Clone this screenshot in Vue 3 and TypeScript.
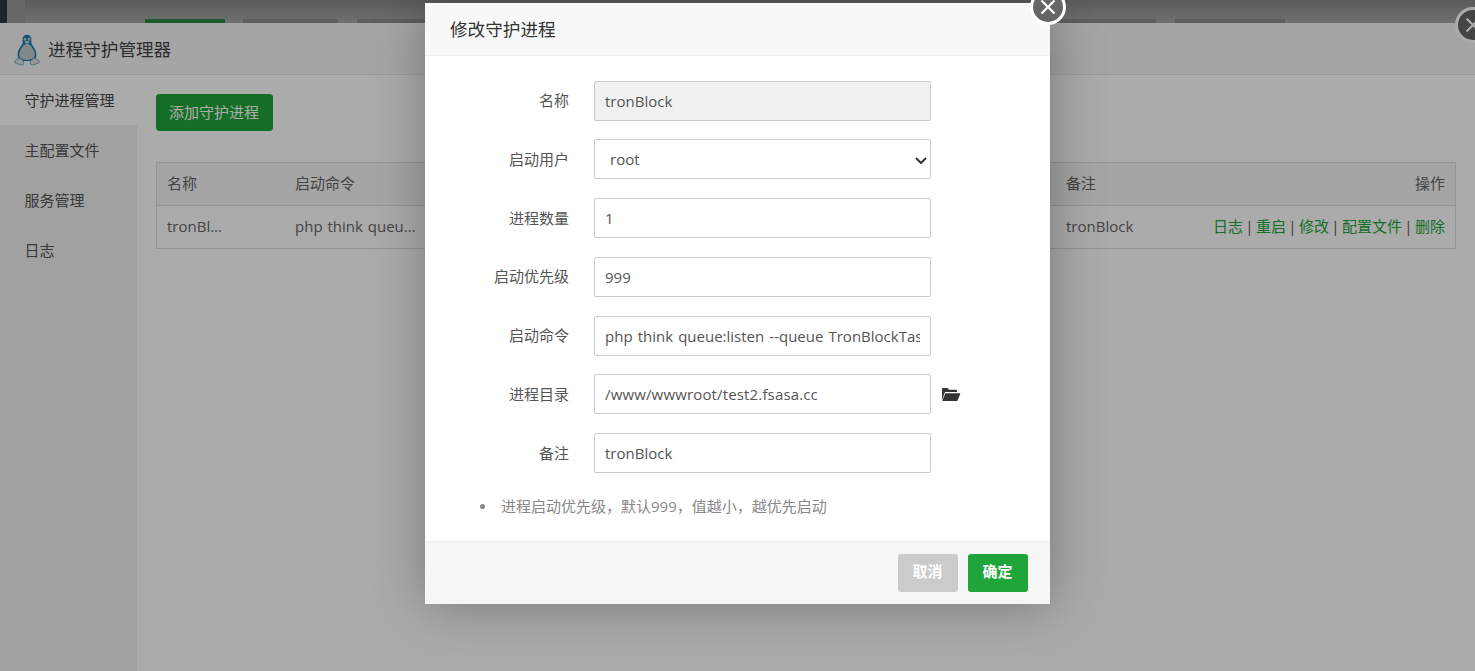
<script setup lang="ts">
const menu: string[] = ['守护进程管理', '主配置文件', '服务管理', '日志']
const ops: string[] = ['日志', '重启', '修改', '配置文件', '删除']
const fields = [
  { label: '名称', value: 'tronBlock', disabled: true },
  { label: '启动用户', select: true, value: 'root' },
  { label: '进程数量', value: '1' },
  { label: '启动优先级', value: '999' },
  { label: '启动命令', value: 'php think queue:listen --queue TronBlockTask', wide: 'cmd' },
  { label: '进程目录', value: '/www/wwwroot/test2.fsasa.cc', folder: true, wide: 'path' },
  { label: '备注', value: 'tronBlock' },
]
</script>

<template>
  <div class="page">
    <div class="topbar">
      <div class="rail"></div>
      <div class="rail2"></div>
      <div class="tabs">
        <span class="tab green"></span>
        <span class="tab t2"></span>
        <span class="tab t3"></span>
        <span class="tab t4"></span>
        <span class="tab t5"></span>
      </div>
    </div>
    <div class="panel">
      <header class="panel-head">
        <svg class="tux" viewBox="0 0 26 32" width="26" height="32">
          <path d="M13 .8c-3 0-4.400 2.300-4.400 5 0 2 .4 3-.6 4.700C6.400 13 3.600 16.200 3.600 20.500c0 2 .6 3.400 1.400 4.300L9 27h8l4-2.200c.9-1 1.400-2.400 1.400-4.300 0-4.300-2.800-7.500-4.400-10-1-1.700-.6-2.700-.6-4.700 0-2.700-1.400-5-4.400-5z" fill="#1b7fae" />
          <path d="M13 9.800c-2.200.6-3.700 1.400-4.400 3-1.500 2.200-3.400 4.900-3.400 7.900 0 2.900 2.400 5.200 7.800 5.200s7.800-2.300 7.800-5.200c0-3-1.900-5.700-3.400-7.900-.7-1.600-2.200-2.400-4.400-3z" fill="#c4ccd0" />
          <ellipse cx="11" cy="5.200" rx="1.200" ry="1.600" fill="#c4ccd0" />
          <ellipse cx="15" cy="5.200" rx="1.200" ry="1.600" fill="#c4ccd0" />
          <path d="M10.300 8l2.700-1.300L15.700 8 13 9.800z" fill="#d8dcdc" />
          <path d="M5.500 24.300C3.200 24.800.6 26.800.5 28c0 1.200 3 1.600 5.500 2.600 1.700.8 3.200.6 3.600-.8.500-1.700-1.400-5-4.100-5.500zM20.500 24.300c2.300.5 4.900 2.500 5 3.700 0 1.200-3 1.600-5.500 2.600-1.700.8-3.200.6-3.600-.8-.5-1.700 1.400-5 4.100-5.500z" fill="#dfe3e3" stroke="#3f8fb3" stroke-width=".7" />
        </svg>
        <span class="panel-title">进程守护管理器</span>
      </header>
      <div class="panel-body">
        <nav class="side">
          <div v-for="(m, i) in menu" :key="m" class="side-item" :class="{ on: i === 0 }">{{ m }}</div>
        </nav>
        <main class="content">
          <button class="add" type="button">添加守护进程</button>
          <div class="table">
            <div class="row head">
              <span>名称</span><span>启动命令</span><span>备注</span><span class="right">操作</span>
            </div>
            <div class="row">
              <span>tronBl...</span><span class="cmd-cell">php think queu...</span><span>tronBlock</span>
              <span class="right links">
                <template v-for="(o, i) in ops" :key="o"><a>{{ o }}</a><span v-if="i < ops.length - 1" class="sep">|</span></template>
              </span>
            </div>
          </div>
        </main>
      </div>
    </div>
    <div class="close back-close"><svg viewBox="0 0 16 16" width="16" height="16"><path d="M1.500 1.500l13 13M14.500 1.500l-13 13" stroke="#fff" stroke-width="2.200" /></svg></div>
    <div class="shade"></div>
    <section class="modal">
      <div class="close front-close"><svg viewBox="0 0 16 16" width="16" height="16"><path d="M1.500 1.500l13 13M14.500 1.500l-13 13" stroke="#fff" stroke-width="2.200" /></svg></div>
      <h2 class="modal-title">修改守护进程</h2>
      <div class="form">
        <div v-for="f in fields" :key="f.label" class="field">
          <label class="label">{{ f.label }}</label>
          <select v-if="f.select" class="control sel"><option>{{ f.value }}</option></select>
          <input v-else class="control" :class="[f.wide, { off: f.disabled }]" :value="f.value" :disabled="f.disabled" type="text" />
          <svg v-if="f.folder" class="folder" viewBox="0 0 20 15" width="20" height="15">
            <path d="M1 13.500V2.300C1 1.500 1.500 1 2.200 1h4c.6 0 1 .4 1.200 1l.3.700h7c.8 0 1.300.5 1.300 1.200V5H5.300c-.9 0-1.400.4-1.800 1.100z" fill="#333" />
            <path d="M4.300 6.200h15.200L16.300 14H1.300z" fill="#333" />
          </svg>
        </div>
      </div>
      <div class="note">进程启动优先级，默认999，值越小，越优先启动</div>
      <footer class="foot">
        <button class="btn cancel" type="button">取消</button>
        <button class="btn ok" type="button">确定</button>
      </footer>
    </section>
  </div>
</template>

<style scoped>
.page {
  position: relative;
  height: 671px;
  overflow: hidden;
  display: flex;
  flex-direction: column;
  font-family: "Open Sans", "Noto Sans CJK SC", sans-serif;
  font-size: 15px;
  color: #666;
  background: #fff;
}
.topbar {
  height: 23px;
  flex: none;
  display: flex;
  background: linear-gradient(#888, #a8a8a8);
}
.rail { width: 7px; background: #30363d; }
.rail2 { width: 18px; background: #9a9a9a; margin-right: 1px; }
.tabs { position: relative; flex: 1; display: flex; align-items: flex-end; }
.tab { height: 4px; margin-right: 19px; background: #8c8c8c; }
.tab.green { width: 80px; margin-left: 119px; margin-right: 18px; background: #2a8a3e; }
.t2 { width: 95px; }
.t3 { width: 300px; }
.t4 { width: 400px; margin-left: 80px; margin-right: 19px; }
.t5 { width: 110px; }
.panel { flex: 1; display: flex; flex-direction: column; background: #fff; min-height: 0; }
.panel-head {
  height: 52px;
  flex: none;
  box-sizing: border-box;
  display: flex;
  align-items: center;
  gap: 8px;
  padding-left: 14px;
  background: #f6f6f6;
  border-bottom: 1px solid #e6e6e6;
}
.tux { margin-top: 2px; }
.panel-title { font-size: 17.6px; color: #444; }
.panel-body { flex: 1; display: flex; min-height: 0; }
.side { width: 137px; flex: none; background: #f0f0f0; }
.side-item { height: 50px; line-height: 50px; padding-left: 24.5px; color: #555; }
.side-item.on { background: #fff; color: #444; }
.content { flex: 1; padding: 19px 19px 0; min-width: 0; background: #fff; }
.add {
  display: block;
  width: 117px;
  height: 37px;
  padding: 0 1px 2px 0;
  border: 1px solid #20a53a;
  border-radius: 3px;
  background: #20a53a;
  color: #fff;
  font: inherit;
}
.table { margin-top: 31px; border: 1px solid #ddd; }
.row {
  display: grid;
  grid-template-columns: 128px 771px 146px 1fr;
  height: 42px;
  line-height: 41px;
  padding: 0 10px;
  box-sizing: border-box;
  white-space: nowrap;
}
.row.head { height: 43px; background: #f6f6f6; border-bottom: 1px solid #ddd; }
.cmd-cell { word-spacing: 1px; }
.right { text-align: right; }
.links { color: #555; }
.links a { color: #20a53a; }
.sep { display: inline-block; width: 13px; text-align: center; }
.close {
  position: absolute;
  box-sizing: border-box;
  width: 36px;
  height: 36px;
  border-radius: 50%;
  border: 3px solid #fff;
  background: #666;
  display: flex;
  align-items: center;
  justify-content: center;
}
.back-close { left: 1455px; top: 7px; }
.shade { position: absolute; inset: 0; background: rgba(0, 0, 0, .33); }
.modal {
  position: absolute;
  left: 425px;
  top: 3px;
  width: 625px;
  height: 601px;
  display: flex;
  flex-direction: column;
  background: #fff;
  box-shadow: 1px 1px 50px rgba(0, 0, 0, .3);
}
.front-close { left: 605px; top: -14px; z-index: 1; }
.modal-title {
  margin: 0;
  height: 52px;
  flex: none;
  padding-left: 25px;
  line-height: 52px;
  font-size: 17.6px;
  font-weight: 400;
  color: #333;
  background: #f8f8f8;
  border-bottom: 1px solid #eee;
}
.form { padding-top: 24.7px; display: flex; flex-direction: column; gap: 18.72px; }
.field { display: flex; align-items: center; height: 40px; }
.label { width: 144px; margin-right: 25px; padding-bottom: 2px; text-align: right; color: #555; }
.control {
  box-sizing: border-box;
  width: 337px;
  height: 40px;
  padding: 0 10px;
  border: 1px solid #ccc;
  border-radius: 2px;
  background: #fff;
  color: #555;
  font: inherit;
  outline: none;
}
.control.off { background: #f1f1f1; }
.control.cmd { word-spacing: 1.2px; }
.control.path { letter-spacing: .15px; }
.sel {
  appearance: none;
  padding-left: 15px;
  background: #fff url("data:image/svg+xml,%3Csvg xmlns='http://www.w3.org/2000/svg' width='12' height='7'%3E%3Cpath d='M1 1l5 5 5-5' fill='none' stroke='%23333' stroke-width='2'/%3E%3C/svg%3E") no-repeat 320px 17px;
}
.folder { margin-left: 10px; }
.note {
  position: relative;
  margin-top: 23px;
  padding-left: 76px;
  line-height: 20px;
  color: #888;
}
.note::before {
  content: "";
  position: absolute;
  left: 55px;
  top: 8px;
  width: 5px;
  height: 5px;
  border-radius: 50%;
  background: #888;
}
.foot {
  margin-top: auto;
  height: 63px;
  box-sizing: border-box;
  display: flex;
  justify-content: flex-end;
  gap: 10px;
  padding: 12px 22px 0 0;
  background: #f5f6f5;
  border-top: 1px solid #eee;
}
.btn {
  width: 60px;
  height: 38px;
  padding: 0 1px 6px 0;
  border: 0;
  border-radius: 3px;
  color: #fff;
  font: inherit;
  font-weight: 700;
}
.cancel { background: #cbcbcb; }
.ok { background: #20a53a; }
</style>

<style>
html, body { margin: 0; overflow: hidden; }
</style>
